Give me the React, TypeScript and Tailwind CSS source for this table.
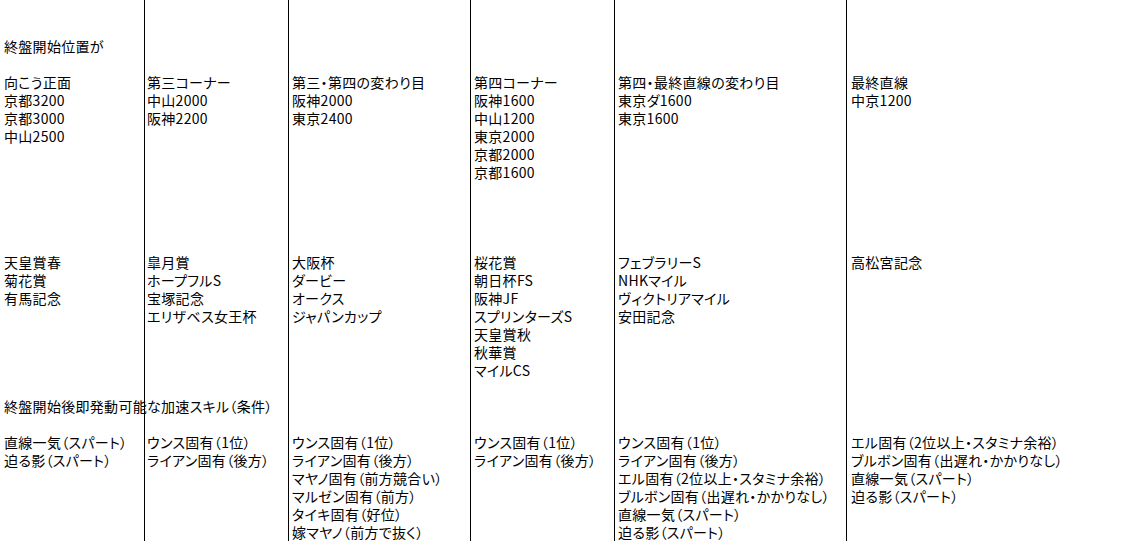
const columns: { width: string; pad: string; border: boolean; cells: Record<number, string> }[] = [
  {
    width: "w-[145px]",
    pad: "pl-[4px]",
    border: true,
    cells: {
      2: "終盤開始位置が",
      4: "向こう正面",
      5: "京都3200",
      6: "京都3000",
      7: "中山2500",
      14: "天皇賞春",
      15: "菊花賞",
      16: "有馬記念",
      22: "終盤開始後即発動可能な加速スキル（条件）",
      24: "直線一気（スパート）",
      25: "迫る影（スパート）",
    },
  },
  {
    width: "w-[144px]",
    pad: "pl-[2px]",
    border: true,
    cells: {
      4: "第三コーナー",
      5: "中山2000",
      6: "阪神2200",
      14: "皐月賞",
      15: "ホープフルS",
      16: "宝塚記念",
      17: "エリザベス女王杯",
      24: "ウンス固有（1位）",
      25: "ライアン固有（後方）",
    },
  },
  {
    width: "w-[182px]",
    pad: "pl-[3px]",
    border: true,
    cells: {
      4: "第三・第四の変わり目",
      5: "阪神2000",
      6: "東京2400",
      14: "大阪杯",
      15: "ダービー",
      16: "オークス",
      17: "ジャパンカップ",
      24: "ウンス固有（1位）",
      25: "ライアン固有（後方）",
      26: "マヤノ固有（前方競合い）",
      27: "マルゼン固有（前方）",
      28: "タイキ固有（好位）",
      29: "嫁マヤノ（前方で抜く）",
    },
  },
  {
    width: "w-[144px]",
    pad: "pl-[3px]",
    border: true,
    cells: {
      4: "第四コーナー",
      5: "阪神1600",
      6: "中山1200",
      7: "東京2000",
      8: "京都2000",
      9: "京都1600",
      14: "桜花賞",
      15: "朝日杯FS",
      16: "阪神JF",
      17: "スプリンターズS",
      18: "天皇賞秋",
      19: "秋華賞",
      20: "マイルCS",
      24: "ウンス固有（1位）",
      25: "ライアン固有（後方）",
    },
  },
  {
    width: "w-[232px]",
    pad: "pl-[3px]",
    border: true,
    cells: {
      4: "第四・最終直線の変わり目",
      5: "東京ダ1600",
      6: "東京1600",
      14: "フェブラリーS",
      15: "NHKマイル",
      16: "ヴィクトリアマイル",
      17: "安田記念",
      24: "ウンス固有（1位）",
      25: "ライアン固有（後方）",
      26: "エル固有（2位以上・スタミナ余裕）",
      27: "ブルボン固有（出遅れ・かかりなし）",
      28: "直線一気（スパート）",
      29: "迫る影（スパート）",
    },
  },
  {
    width: "flex-1",
    pad: "pl-[4px]",
    border: false,
    cells: {
      4: "最終直線",
      5: "中京1200",
      14: "高松宮記念",
      24: "エル固有（2位以上・スタミナ余裕）",
      25: "ブルボン固有（出遅れ・かかりなし）",
      26: "直線一気（スパート）",
      27: "迫る影（スパート）",
    },
  },
];

const rows = Array.from({ length: 30 }, (_, i) => i);

export default function App() {
  return (
    <div className="h-[541px] w-[1135px] overflow-hidden bg-white text-black font-['Noto_Sans_CJK_JP','Noto_Sans',sans-serif] text-[14px] tracking-[0.3px] [font-feature-settings:'palt']">
      <div className="flex h-full">
        {columns.map((col, ci) => (
          <div
            key={ci}
            className={`${col.width} shrink-0 h-full pt-[1px] ${col.border ? "border-r border-black" : ""}`}
          >
            {rows.map((r) => (
              <div
                key={r}
                className={`h-[18px] leading-[18px] whitespace-nowrap ${col.pad}`}
              >
                {col.cells[r] ?? ""}
              </div>
            ))}
          </div>
        ))}
      </div>
    </div>
  );
}
